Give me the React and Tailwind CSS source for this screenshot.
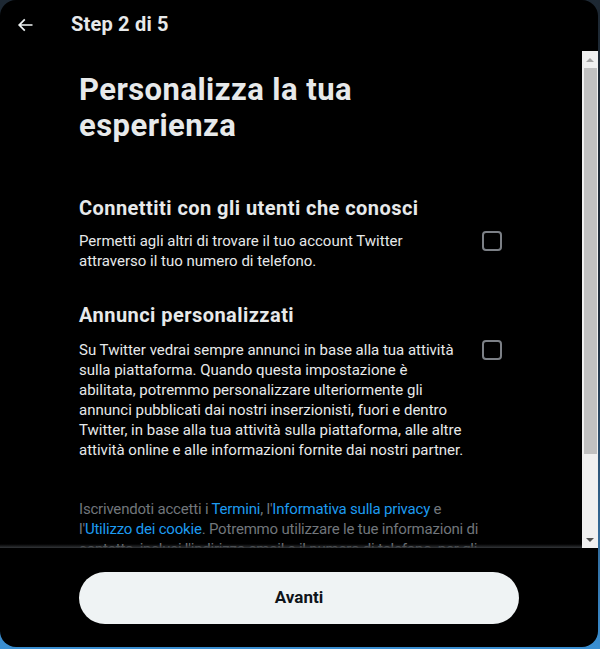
import React from "react";

const font = { fontFamily: "Roboto, 'Liberation Sans', Arial, sans-serif" };

function Checkbox() {
  return (
    <div className="w-[40px] flex justify-center shrink-0">
      <div className="w-[20px] h-[20px] rounded-[4px] border-2 border-[#7c8086]" />
    </div>
  );
}

function Lines({ lines }) {
  return (
    <div className="flex flex-col">
      {lines.map((l, i) => (
        <span key={i} className="whitespace-nowrap">{l}</span>
      ))}
    </div>
  );
}

export default function App() {
  return (
    <div
      className="w-[600px] h-[649px] overflow-hidden bg-gradient-to-b from-[#1d2833] via-[#1f2c3a] to-[#3a8fd2]"
      style={font}
    >
      <div className="w-[598px] h-[647px] bg-black rounded-[16px] flex flex-col overflow-hidden">
        {/* header */}
        <div className="h-[51px] shrink-0 flex items-center pb-[4px]">
          <div className="w-[50px] flex justify-center pt-[2px]">
            <svg viewBox="0 0 24 24" width="20" height="20" fill="#eff3f4">
              <path d="M7.414 13l5.043 5.04-1.414 1.42L3.586 12l7.457-7.46 1.414 1.42L7.414 11H21v2H7.414z" />
            </svg>
          </div>
          <div className="pl-[21px] text-[20px] font-bold text-[#e7e9ea] leading-[24px] tracking-[0.2px]">
            Step 2 di 5
          </div>
        </div>
        {/* scroll area */}
        <div className="h-[497px] shrink-0 flex relative">
          <div className="flex-1 overflow-hidden pl-[79px] pr-[70px] pt-[21px] text-[#e7e9ea]">
            <h1 className="text-[31px] font-bold leading-[36px] tracking-[0.45px]">
              Personalizza la tua
              <br />
              esperienza
            </h1>
            <h2 className="mt-[52px] text-[20px] font-bold leading-[24px] tracking-[0.45px]">
              Connettiti con gli utenti che conosci
            </h2>
            <div className="mt-[11px] flex justify-between text-[15px] leading-[20px]">
              <Lines
                lines={[
                  "Permetti agli altri di trovare il tuo account Twitter",
                  "attraverso il tuo numero di telefono.",
                ]}
              />
              <Checkbox />
            </div>
            <h2 className="mt-[32px] text-[20px] font-bold leading-[24px] tracking-[0.45px]">
              Annunci personalizzati
            </h2>
            <div className="mt-[13px] flex justify-between text-[15px] leading-[20px]">
              <Lines
                lines={[
                  "Su Twitter vedrai sempre annunci in base alla tua attività",
                  "sulla piattaforma. Quando questa impostazione è",
                  "abilitata, potremmo personalizzare ulteriormente gli",
                  "annunci pubblicati dai nostri inserzionisti, fuori e dentro",
                  "Twitter, in base alla tua attività sulla piattaforma, alle altre",
                  "attività online e alle informazioni fornite dai nostri partner.",
                ]}
              />
              <Checkbox />
            </div>
            <div className="mt-[39px] text-[15px] leading-[20px] text-[#71767b] flex flex-col tracking-[-0.2px]">
              <span className="whitespace-nowrap">
                Iscrivendoti accetti i <span className="text-[#1d9bf0]">Termini</span>, l'
                <span className="text-[#1d9bf0]">Informativa sulla privacy</span> e
              </span>
              <span className="whitespace-nowrap">
                l'<span className="text-[#1d9bf0]">Utilizzo dei cookie</span>. Potremmo utilizzare le tue informazioni di
              </span>
              <span className="whitespace-nowrap">
                contatto, inclusi l'indirizzo email e il numero di telefono, per gli
              </span>
            </div>
          </div>
          {/* scrollbar */}
          <div className="w-[16px] shrink-0 bg-[#f0f0f0] flex flex-col items-center">
            <div className="h-[17px] w-full flex items-center justify-center">
              <div className="w-0 h-0 border-l-[4px] border-r-[4px] border-b-[4px] border-l-transparent border-r-transparent border-b-[#a3a3a3]" />
            </div>
            <div className="w-[13px] h-[386px] bg-[#c1c1c1]" />
            <div className="flex-1" />
            <div className="h-[17px] w-full flex items-center justify-center">
              <div className="w-0 h-0 border-l-[4px] border-r-[4px] border-t-[4px] border-l-transparent border-r-transparent border-t-[#505050]" />
            </div>
          </div>
          <div className="absolute left-0 right-[16px] bottom-0 h-[4px] bg-gradient-to-b from-transparent to-[#333639]" />
        </div>
        {/* footer */}
        <div className="flex-1 flex items-start justify-center pt-[24px]">
          <button className="w-[440px] h-[52px] rounded-full bg-[#eff3f4] text-[#0f1419] text-[17px] font-bold flex items-center justify-center">
            Avanti
          </button>
        </div>
      </div>
    </div>
  );
}
